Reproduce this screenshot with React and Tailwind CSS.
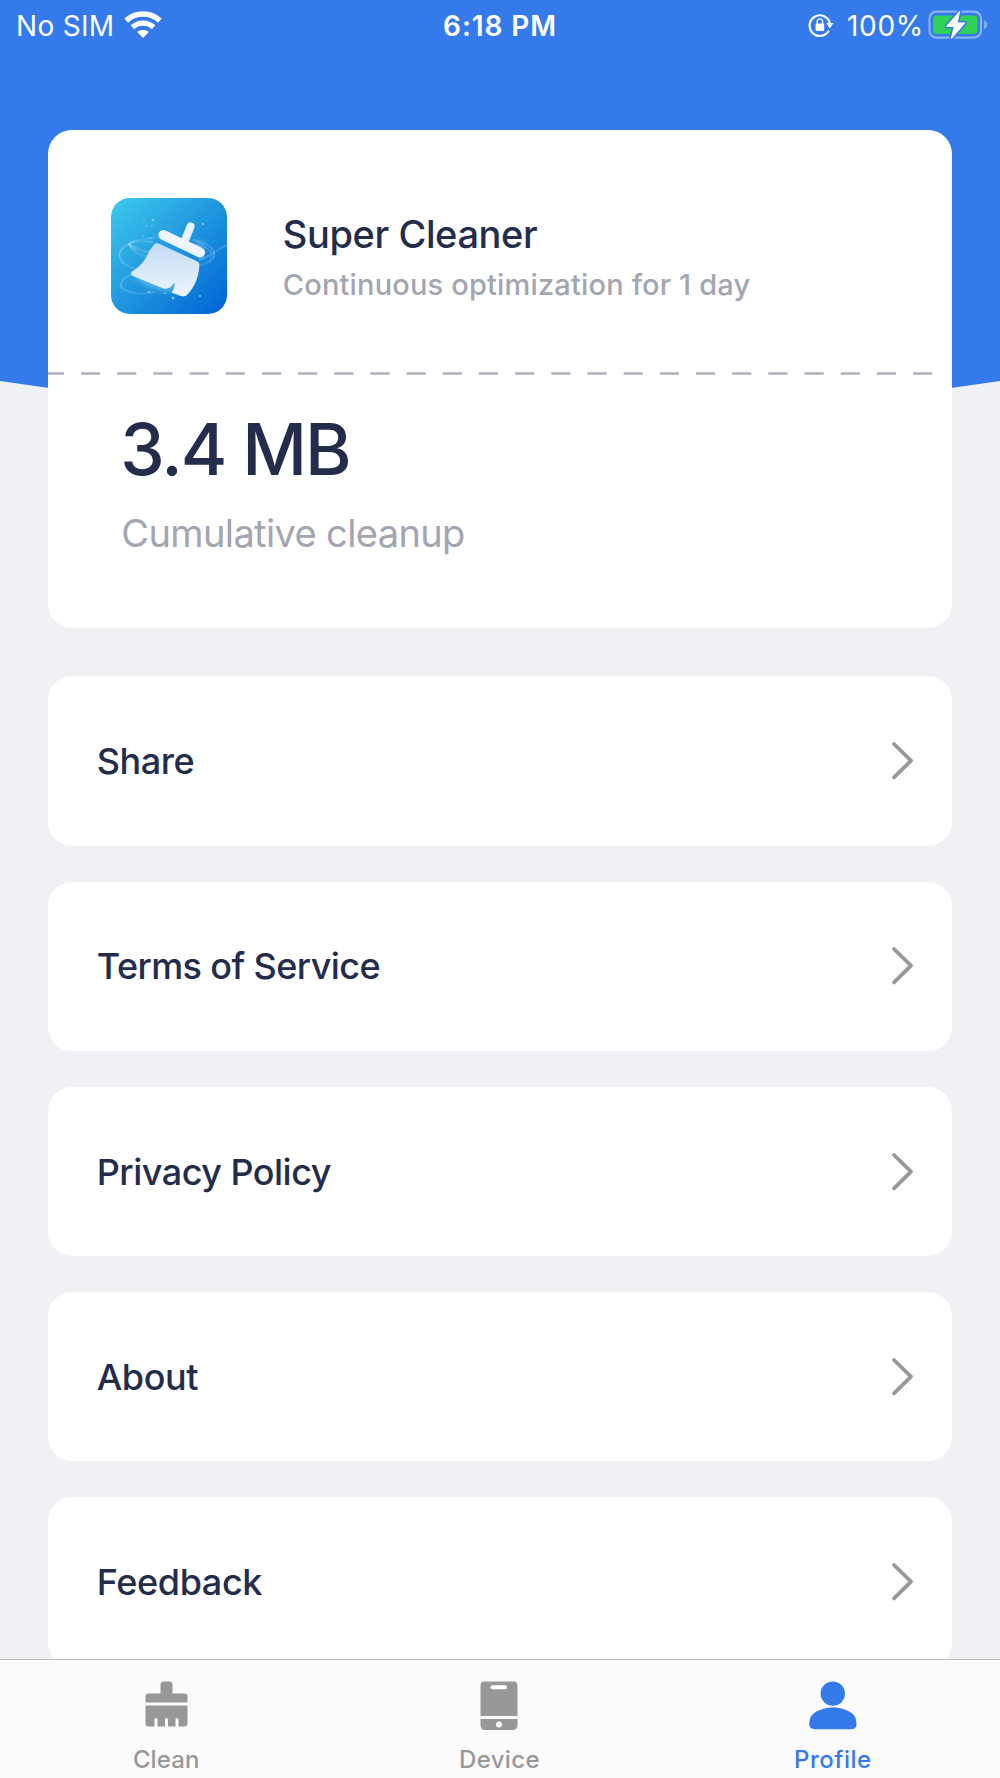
import React, { useState } from "react";

const menuItems = [
  { label: "Share", spacing: "tracking-[-0.45px]" },
  { label: "Terms of Service", spacing: "tracking-[-0.6px]" },
  { label: "Privacy Policy", spacing: "tracking-[-0.52px]" },
  { label: "About", spacing: "tracking-[-0.45px]" },
  { label: "Feedback", spacing: "tracking-[-0.4px]" },
];

const WifiIcon = () => (
  <svg className="w-[38px] h-7" viewBox="0 0 38 28" fill="none">
    <path d="M2.2 9.6C11.6 0.8 26.4 0.8 35.8 9.6" stroke="#fff" strokeWidth="5.6" />
    <path d="M8.4 16.2C14.4 10.8 23.6 10.8 29.6 16.2" stroke="#fff" strokeWidth="5.2" />
    <path d="M13.2 21C16.4 18.4 21.6 18.4 24.8 21L19 27Z" fill="#fff" />
  </svg>
);

const RotationLockIcon = () => (
  <svg className="w-[26px] h-6" viewBox="0 0 26 24" fill="none">
    <path d="M20.4 18.4A10.3 10.3 0 1 1 21.7 9.6" stroke="#fff" strokeWidth="2.1" strokeLinecap="round" />
    <path d="M18.2 10H25.4L21.9 15.4Z" fill="#fff" />
    <rect x="7.6" y="10.6" width="8.6" height="7.4" rx="1" fill="#fff" />
    <path d="M9.2 11V8.6a2.7 2.7 0 0 1 5.4 0V11" stroke="#fff" strokeWidth="1.4" />
  </svg>
);

const BatteryIcon = () => (
  <svg className="w-[60px] h-8" viewBox="0 0 60 32" fill="none">
    <rect x="1.5" y="2.6" width="51.5" height="26" rx="7" stroke="#fff" strokeOpacity="0.42" strokeWidth="2.2" />
    <path d="M56.2 11C60 13 60 18.5 56.2 20.5Z" fill="#fff" fillOpacity="0.42" />
    <rect x="5" y="6.5" width="44.5" height="18.4" rx="3.6" fill="#30d158" />
    <path
      d="M31.6 2.5 18.4 17.4H26.2L23.4 29.5 37 13.9H29.2Z"
      fill="#fff"
      stroke="#347aea"
      strokeWidth="4"
      strokeLinejoin="round"
    />
    <path d="M31.6 2.5 18.4 17.4H26.2L23.4 29.5 37 13.9H29.2Z" fill="#fff" stroke="#fff" strokeWidth="1" strokeLinejoin="round" />
  </svg>
);

const AppLogo = () => (
  <svg className="w-[116px] h-[116px] shrink-0" viewBox="0 0 116 116" fill="none">
    <defs>
      <linearGradient id="logoBg" x1="0" y1="0" x2="1" y2="1">
        <stop offset="0" stopColor="#3dcaee" />
        <stop offset="0.45" stopColor="#229bdf" />
        <stop offset="1" stopColor="#0062d6" />
      </linearGradient>
      <linearGradient id="logoBrush" x1="0.5" y1="0" x2="0.5" y2="1">
        <stop offset="0" stopColor="#c3dcf6" />
        <stop offset="1" stopColor="#eef5fd" />
      </linearGradient>
      <linearGradient id="logoSwirl" x1="0" y1="0" x2="1" y2="0">
        <stop offset="0" stopColor="#fff" stopOpacity="0.24" />
        <stop offset="0.5" stopColor="#fff" stopOpacity="0.1" />
        <stop offset="1" stopColor="#fff" stopOpacity="0.2" />
      </linearGradient>
      <filter id="logoSoft" x="-30%" y="-30%" width="160%" height="160%">
        <feGaussianBlur stdDeviation="3" />
      </filter>
      <filter id="logoHair" x="-10%" y="-10%" width="120%" height="120%">
        <feGaussianBlur stdDeviation="0.7" />
      </filter>
      <clipPath id="logoClip">
        <rect width="116" height="116" rx="19" />
      </clipPath>
    </defs>
    <g clipPath="url(#logoClip)">
      <rect width="116" height="116" fill="url(#logoBg)" />
      {/* wind around the brush */}
      <path d="M22 76C34 90 52 95 72 92L60 84 34 70Z" fill="#8fd4f5" fillOpacity="0.6" filter="url(#logoSoft)" />
      <path d="M84 46L94 43 90 52Z" fill="#8fd4f5" fillOpacity="0.6" filter="url(#logoSoft)" />
      <g stroke="url(#logoSwirl)" filter="url(#logoHair)">
        <path d="M44 40C18 40 4 52 10 62 14 69 26 72 38 73" strokeWidth="1.6" />
        <path d="M42 44C28 42 18 44 18 46 22 54 30 58 38 59" strokeWidth="2.4" />
        <path d="M18 46C26 52 34 54 42 54" strokeWidth="3" />
        <path d="M82 42C104 46 108 58 98 64 95 66 92 67 88 67" strokeWidth="2.2" />
        <path d="M84 47C100 49 104 56 98 61" strokeWidth="1.4" />
        <path d="M22 76C10 80 6 88 14 92 22 96 34 96 44 94" strokeWidth="1.6" />
        <path d="M88 62C100 58 108 50 118 46" strokeWidth="2" />
      </g>
      {/* dust */}
      <g fill="#a8e2f8" fillOpacity="0.7">
        <circle cx="33" cy="23" r="0.8" />
        <circle cx="42" cy="22" r="1.3" />
        <circle cx="35" cy="28" r="0.8" />
        <circle cx="41" cy="28" r="0.7" />
        <circle cx="32" cy="38" r="0.8" />
        <circle cx="39" cy="40" r="0.7" />
        <circle cx="92" cy="26" r="1.2" />
        <circle cx="38" cy="94" r="1.1" />
        <circle cx="54" cy="95" r="0.9" />
        <circle cx="62" cy="100" r="1.4" />
        <circle cx="89" cy="98" r="1.1" />
      </g>
      {/* handle and bar */}
      <path d="M79.5 28.5 73 45" stroke="#eaf3fc" strokeWidth="8" strokeLinecap="round" />
      <path d="M52.5 37 89 54.5" stroke="#eef5fd" strokeWidth="10" strokeLinecap="round" />
      {/* bristles */}
      <path
        d="M43 46.5C44.5 45 46.5 45 48.5 46L86.5 63.5C88 64.5 88.5 65.5 88.3 67.5C88 78 84 89 76.5 96.5C74.5 98.5 72.5 98.8 70 98L60.5 94.5C62.5 92 63.7 89 63.5 84.5C61 88.5 57 91.5 52.5 90.5L22 78C19.5 77 19.5 74.5 21.5 73.3C30 68 34 62 38.5 53Z"
        fill="url(#logoBrush)"
      />
    </g>
  </svg>
);

const Chevron = () => (
  <svg className="w-[23px] h-10" viewBox="0 0 23 40" fill="none">
    <path d="M3 3 20 19.7 3 36.4" stroke="#97989e" strokeWidth="3.8" strokeLinecap="round" strokeLinejoin="round" />
  </svg>
);

const CleanIcon = () => (
  <svg className="w-12 h-[50px]" viewBox="0 0 48 50" fill="currentColor">
    <path d="M18.5 12.5V3.5a3 3 0 0 1 3-3h6a3 3 0 0 1 3 3v9H42.5a3 3 0 0 1 3 3v6H3.5V15.5a3 3 0 0 1 3-3Z" />
    <path d="M3.5 24.5H45.5V42.5a3 3 0 0 1-3 3H36.5V38.5a1.5 1.5 0 0 0-3 0V45.5H26V38.5a1.5 1.5 0 0 0-3 0V45.5H15.5V38.5a1.5 1.5 0 0 0-3 0V45.5H6.5a3 3 0 0 1-3-3Z" />
  </svg>
);

const DeviceIcon = () => (
  <svg className="w-12 h-[50px]" viewBox="0 0 48 50" fill="currentColor">
    <path d="M5.5 35V4.5a4 4 0 0 1 4-4H38.5a4 4 0 0 1 4 4V35Z" />
    <path d="M5.5 38H42.5V44.5a4.5 4.5 0 0 1-4.5 4.5H10a4.5 4.5 0 0 1-4.5-4.5Z" />
    <rect x="15.5" y="4.3" width="16.5" height="4" rx="2" fill="#fff" />
    <circle cx="24" cy="43.5" r="3" fill="#fff" />
  </svg>
);

const ProfileIcon = () => (
  <svg className="w-12 h-[50px]" viewBox="0 0 48 50" fill="currentColor">
    <circle cx="23.8" cy="12.6" r="12.2" />
    <path d="M24 26.5C32 26.5 39 29 43.8 33C46.3 35 47.3 38.5 47.5 43C47.6 46.5 45.3 48.2 42.3 48.2H5.5C2.5 48.2 0.2 46.5 0.3 43C0.5 38.5 1.5 35 4 33C9 29 16 26.5 24 26.5Z" />
  </svg>
);

const tabs = [
  { name: "Clean", Icon: CleanIcon, spacing: "tracking-[0.1px]" },
  { name: "Device", Icon: DeviceIcon, spacing: "tracking-[0.4px]" },
  { name: "Profile", Icon: ProfileIcon, spacing: "tracking-[0.5px]" },
];

const StatusBar = () => (
  <div className="grid grid-cols-3 items-center h-[50px] pl-4 pr-3 text-[28px] leading-none text-white">
    <div className="flex items-center gap-[10px]">
      <span className="pt-px tracking-[0.3px]">No SIM</span>
      <WifiIcon />
    </div>
    <span className="pt-0.5 pr-1 text-center font-semibold tracking-[0.9px]">6:18 PM</span>
    <div className="flex items-center justify-end">
      <RotationLockIcon />
      <span className="ml-[13px] mr-1 pt-0.5 tracking-[0.7px]">100%</span>
      <BatteryIcon />
    </div>
  </div>
);

const App = () => {
  const [activeTab, setActiveTab] = useState("Profile");

  return (
    <div className="relative flex flex-col w-[1000px] h-[1778px] overflow-hidden bg-[#f0f1f5] font-['Inter','Liberation_Sans',sans-serif]">
      {/* Blue backdrop with a curved bottom */}
      <svg className="absolute inset-x-0 top-0 w-full h-[430px]" viewBox="0 0 1000 430">
        <path d="M0 0H1000V381Q500 457 0 381Z" fill="#347aea" />
      </svg>

      <div className="relative flex-1 min-h-0 overflow-hidden">
        <StatusBar />

        {/* Summary card */}
        <section className="mx-[48.3px] mt-[80.4px] h-[497.6px] rounded-[24px] bg-white">
          <div className="flex items-center h-[242px] pl-[63px] pt-[9px]">
            <AppLogo />
            <div className="ml-[55.5px]">
              <h1 className="pt-[3px] text-[38px] leading-[46px] font-medium tracking-[-0.4px] text-[#242c4c]">
                Super Cleaner
              </h1>
              <p className="mt-[10px] text-[29px] leading-9 font-medium tracking-[0.17px] text-[#a3a5b1]">
                Continuous optimization for 1 day
              </p>
            </div>
          </div>
          <svg className="block w-full h-[3px]" viewBox="0 0 904 3">
            <path d="M-3.2 1.5H890" stroke="#b0b1bd" strokeWidth="2.6" strokeDasharray="19.2 17" />
          </svg>
          <div className="pl-[73px] pt-[31px]">
            <p className="-ml-px text-[71px] leading-[86px] font-medium tracking-[-2px] text-[#242c4c]">3.4 MB</p>
            <p className="mt-[18px] text-[38px] leading-[46px] tracking-[-0.62px] text-[#a3a5b1]">
              Cumulative cleanup
            </p>
          </div>
        </section>

        {/* Menu */}
        <div className="flex flex-col gap-[36px] mx-[48.3px] mt-[48.3px]">
          {menuItems.map((item) => (
            <button
              key={item.label}
              className="flex items-center justify-between shrink-0 h-[169.3px] pl-[48.5px] pr-[38px] rounded-[24px] bg-white"
            >
              <span className={`text-[36px] leading-none font-medium text-[#242c4c] ${item.spacing}`}>
                {item.label}
              </span>
              <Chevron />
            </button>
          ))}
        </div>
      </div>

      {/* Tab bar */}
      <nav className="relative grid grid-cols-3 h-[119px] shrink-0 border-t border-[#bcbcbe] bg-[#fbfbfc]">
        {tabs.map(({ name, Icon, spacing }) => (
          <button
            key={name}
            onClick={() => setActiveTab(name)}
            className={`flex flex-col items-center pt-[21px] pr-px ${
              activeTab === name ? "text-[#347aea]" : "text-[#98989a]"
            }`}
          >
            <Icon />
            <span className={`mt-[14px] text-[24px] leading-[29px] font-medium ${spacing}`}>{name}</span>
          </button>
        ))}
      </nav>
    </div>
  );
};

export default App;
